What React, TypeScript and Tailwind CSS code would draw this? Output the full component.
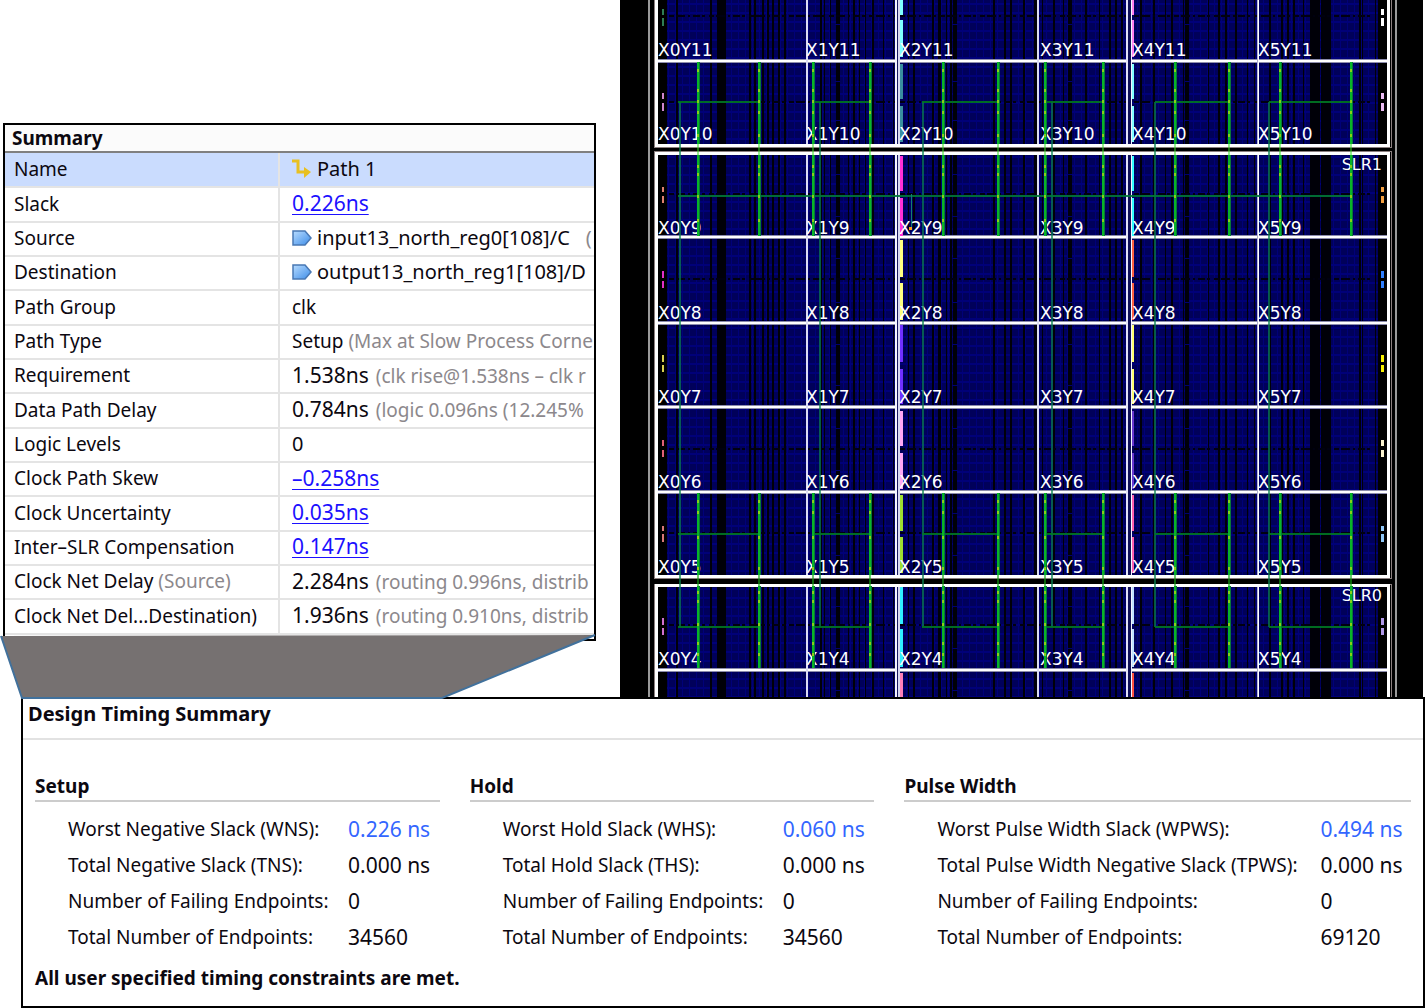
import type { ReactNode } from "react";

/* ---------- Device floorplan data ---------- */

const ROWS = [
  { id: 11, base: 56, bars: [[0, 15], [20, 57]], ports: [[9, 6], [18, 8]], left: "#2e7d55", right: "#ffffff", x2: "#80ffff", x4: "#ff80f0" },
  { id: 10, base: 140, bars: [[64, 99], [106, 142]], ports: [[93, 6], [103, 8]], left: "#cf86cf", right: "#ecbcf4", x2: "#3a8ea0", x4: "#80ffff" },
  { id: 9, base: 234, bars: [[156, 191], [198, 236]], ports: [[187, 5], [196, 7]], left: "#e08070", right: "#f4a040", x2: "#ff30d8", x4: "#30ffff" },
  { id: 8, base: 319, bars: [[240, 277], [283, 320]], ports: [[271, 7], [281, 7]], left: "#e030c8", right: "#3080ff", x2: "#ffff80", x4: "#ff6040" },
  { id: 7, base: 403, bars: [[325, 362], [369, 404]], ports: [[355, 7], [365, 7]], left: "#d8d050", right: "#f8f000", x2: "#7030ff", x4: "#ffff70" },
  { id: 6, base: 488, bars: [[411, 446], [453, 489]], ports: [[440, 6], [450, 7]], left: "#e06078", right: "#fcf4d0", x2: "#ffa8f4", x4: "#6838d0" },
  { id: 5, base: 573, bars: [[495, 531], [537, 573]], ports: [[526, 5], [534, 8]], left: "#d87878", right: "#90c8f8", x2: "#a0e030", x4: "#ff60b0" },
  { id: 4, base: 665, bars: [[587, 624], [629, 667]], ports: [[618, 7], [628, 7]], left: "#d070d0", right: "#b098e8", x2: "#30f0ff", x4: "#c0e0ff" },
];

const LABEL_X = [658, 806, 899, 1040, 1132, 1258];

/* [x, width] of the black resource columns */
const STRIPES = [
  [676, 2], [710, 2], [717, 9], [749, 2], [754, 2], [762, 2], [767, 2], [772, 2], [778, 2], [784, 2],
  [820, 2], [824, 1], [830, 1], [836, 4], [848, 1], [853, 2], [859, 1], [865, 1], [872, 2], [883, 1], [893, 1],
  [908, 1], [913, 2], [932, 2], [938, 3], [946, 1], [950, 2], [953, 4], [993, 2], [1004, 2], [1010, 2], [1023, 2], [1034, 3],
  [1042, 1], [1053, 2], [1063, 1], [1068, 4], [1085, 2], [1099, 1], [1109, 2], [1115, 2], [1121, 2],
  [1140, 2], [1153, 2], [1165, 1], [1171, 2], [1183, 1], [1185, 4], [1208, 1], [1218, 2], [1225, 2], [1235, 2], [1247, 1], [1254, 1],
  [1269, 2], [1281, 2], [1287, 2], [1293, 2], [1303, 1], [1310, 10], [1321, 10], [1359, 2], [1362, 1], [1375, 1],
];

const BLOCKS = [[0, 144], [155, 420], [586, 111]];
const ROW_LINES = [60, 236, 322, 406, 491, 669];
const DASH_LINES = [16, 102, 194, 279, 449, 533, 625];

/* bright clock spines: [x, width] */
const SPINES = [
  [697, 2], [758, 2], [812, 2], [869, 2], [942, 2], [997, 2],
  [1044, 2], [1102, 2], [1174, 2], [1228, 2], [1279, 2], [1350, 2],
];
const SPINE_SPANS = [[62, 82], [155, 81], [493, 82], [586, 82]];
const TICKS = [70, 90, 101, 112, 135, 166, 174, 196, 220, 501, 512, 537, 568, 592, 601, 624, 643, 654];

const BRANCHES = [[678, 758], [813, 870], [922, 998], [1045, 1103], [1155, 1229], [1269, 1351]];
const TRUNKS = [679, 819, 922, 1051, 1154, 1268];

function DeviceView() {
  return (
    <svg
      role="img"
      aria-label="Device floorplan"
      viewBox="620 0 803 697"
      preserveAspectRatio="xMinYMin slice"
      className="block h-full w-full bg-black"
    >
      <defs>
        <pattern id="fabric" width="7" height="9" patternUnits="userSpaceOnUse">
          <rect width="7" height="9" fill="#00005a" />
          <rect y="3" width="7" height="2" fill="#000078" />
          <rect x="3" width="1" height="9" fill="#000078" />
        </pattern>
      </defs>

      <g shapeRendering="crispEdges">
        <rect x="648" width="2" height="697" fill="#9a9a9a" />
        <rect x="1395" width="2" height="697" fill="#9a9a9a" />

        {BLOCKS.map(([y, h]) => (
          <g key={y}>
            <rect x="667" y={y} width="711" height={h} fill="url(#fabric)" />
            {STRIPES.map(([x, w]) => (
              <rect key={x} x={x} y={y} width={w} height={h} fill="#000008" />
            ))}
          </g>
        ))}

        {DASH_LINES.map((y) => (
          <g key={y} stroke="#000010" strokeWidth="2" strokeDasharray="5 2 9 3 2 3 7 2 3 4">
            <path d={`M669 ${y}H895M900 ${y}H1127M1134 ${y}H1374`} />
          </g>
        ))}

        {[24, 81, 120, 174, 216, 258, 302, 344, 385, 428, 470, 513, 555, 606, 648, 690].map((y) => (
          <path key={y} d={`M835 ${y}h5M952 ${y}h6M1067 ${y}h5M1185 ${y}h5`} stroke="#000070" />
        ))}

        {/* region separators */}
        {ROW_LINES.map((y) => (
          <g key={y}>
            <rect x="657" y={y - 1} width="731" height="4" fill="#8c8cac" />
            <rect x="657" y={y} width="731" height="2" fill="#ffffff" />
          </g>
        ))}
        {BLOCKS.map(([y, h]) => (
          <g key={y}>
            <rect x="806" y={y} width="2" height={h} fill="#dcdcf4" />
            <rect x="895" y={y} width="2" height={h} fill="#f4f4ff" />
            <rect x="897" y={y} width="1" height={h} fill="#181860" />
            <rect x="898" y={y} width="2" height={h} fill="#d8d8f0" />
            <rect x="1037" y={y} width="2" height={h} fill="#dcdcf4" />
            <rect x="1126" y={y} width="2" height={h} fill="#e4e4f8" />
            <rect x="1128" y={y} width="3" height={h} fill="#101058" />
            <rect x="1131" y={y} width="1" height={h} fill="#f4f4ff" />
            <rect x="1258" y={y} width="1" height={h} fill="#ffffff" />
            <rect x="1257" y={y} width="1" height={h} fill="#b0b0d0" />
          </g>
        ))}

        {/* super logic region outlines */}
        <g fill="none" stroke="#8c8080" strokeWidth="1">
          <path d="M654 0V147H1391V0M654 151V578H1391V151ZM654 697V584H1391V697" />
        </g>
        <g fill="none" stroke="#ffffff">
          <path d="M656 0V145H1388V0" strokeWidth="3" />
          <path d="M656 153H1388V576H656Z" strokeWidth="3" />
          <path d="M656 697V585H1388V697" strokeWidth="3" />
        </g>

        {/* I/O bank markers */}
        {ROWS.map((row) => (
          <g key={row.id}>
            {row.ports.map(([y, h]) => (
              <g key={y}>
                <rect x="662" y={y} width="2" height={h} fill={row.left} />
                <rect x="1381" y={y} width="3" height={h} fill={row.right} />
              </g>
            ))}
            {row.bars.map(([y0, y1]) => (
              <g key={y0}>
                <rect x="900" y={y0} width="3" height={y1 - y0} fill={row.x2} />
                <rect x="1132" y={y0} width="2" height={y1 - y0} fill={row.x4} />
              </g>
            ))}
          </g>
        ))}
        <rect x="900" y="673" width="3" height="24" fill="#ff80b8" />
        <rect x="1132" y="673" width="2" height="24" fill="#ff5040" />
      </g>

      <g fill="#ffffff" fontFamily='"DejaVu Sans", sans-serif' fontSize="17">
        {ROWS.map((row) =>
          LABEL_X.map((x, col) => (
            <text key={`${col}-${row.id}`} x={x} y={row.base}>{`X${col}Y${row.id}`}</text>
          )),
        )}
        <text x="1382" y="170" fontSize="16" textAnchor="end">SLR1</text>
        <text x="1382" y="601" fontSize="16" textAnchor="end">SLR0</text>
      </g>

      {/* clock routing */}
      <g shapeRendering="crispEdges">
        {TRUNKS.map((x) => (
          <rect key={x} x={x} y="102" width="2" height="525" fill="#088050" fillOpacity="0.7" />
        ))}
        {BRANCHES.map(([x0, x1]) =>
          [101, 533, 626].map((y) => (
            <rect key={`${x0}-${y}`} x={x0} y={y} width={x1 - x0} height="2" fill="#007824" fillOpacity="0.9" />
          )),
        )}
        <rect x="678" y="195" width="672" height="2" fill="#007838" fillOpacity="0.9" />
        <rect x="911" y="194" width="1" height="34" fill="#108070" />
        <rect x="909" y="227" width="3" height="3" fill="#ffa020" />
        {SPINES.map(([x, w]) => (
          <g key={x}>
            <rect x={x} y="144" width="2" height="11" fill="#30e020" fillOpacity="0.5" />
            <rect x={x} y="575" width="2" height="11" fill="#10a810" fillOpacity="0.6" />
            {SPINE_SPANS.map(([y, h]) => (
              <g key={y}>
                <rect x={x} y={y} width={w + 1} height={h} fill="#087838" />
                <rect x={x} y={y} width={w} height={h} fill="#08b428" />
              </g>
            ))}
            {TICKS.map((y) => (
              <rect key={y} x={x} y={y - 1} width="2" height="3" fill="#88d018" />
            ))}
          </g>
        ))}
      </g>
    </svg>
  );
}

/* ---------- Path summary ---------- */

function PathIcon() {
  return (
    <svg width="20" height="19" viewBox="0 0 20 19" className="shrink-0" aria-hidden="true">
      <path d="M0 2H6V13H13" fill="none" stroke="#e8c020" strokeWidth="3" />
      <path d="M12 8L19 13L12 19Z" fill="#e8c020" />
    </svg>
  );
}

function PinIcon() {
  return (
    <svg width="20" height="16" viewBox="0 0 20 16" className="shrink-0" aria-hidden="true">
      <defs>
        <linearGradient id="pin" x1="0" y1="0" x2="1" y2="1">
          <stop offset="0" stopColor="#b8dcff" />
          <stop offset="1" stopColor="#3c8ce8" />
        </linearGradient>
      </defs>
      <path d="M1 1H13L19 8L13 15H1Z" fill="url(#pin)" stroke="#4878b4" strokeWidth="1.5" />
    </svg>
  );
}

const Note = ({ children }: { children: ReactNode }) => <span className="text-[#8c888c]">{children}</span>;

const ValueLink = ({ children }: { children: ReactNode }) => (
  <a href="#path" className="text-[21px] text-[#1c10ff] underline decoration-1 underline-offset-3">{children}</a>
);

const Figure = ({ value, note }: { value: string; note: string }) => (
  <>
    <span className="text-[21px]">{value}</span>
    <span className="ml-[7px] text-[19px]"><Note>{note}</Note></span>
  </>
);

const SUMMARY: { label: ReactNode; key: string; value: ReactNode }[] = [
  { key: "name", label: "Name", value: <span className="flex items-center gap-[5px] text-[20px]"><PathIcon />Path 1</span> },
  { key: "slack", label: "Slack", value: <ValueLink>0.226ns</ValueLink> },
  {
    key: "source",
    label: "Source",
    value: (
      <span className="flex items-center text-[20px]">
        <PinIcon />
        <span className="ml-[5px]">input13_north_reg0[108]/C</span>
        <span className="ml-4"><Note>(</Note></span>
      </span>
    ),
  },
  {
    key: "destination",
    label: "Destination",
    value: <span className="flex items-center gap-[5px] text-[20px]"><PinIcon />output13_north_reg1[108]/D</span>,
  },
  { key: "group", label: "Path Group", value: "clk" },
  { key: "type", label: "Path Type", value: <>Setup <Note>(Max at Slow Process Corne</Note></> },
  { key: "req", label: "Requirement", value: <Figure value="1.538ns" note="(clk rise@1.538ns – clk r" /> },
  { key: "data", label: "Data Path Delay", value: <Figure value="0.784ns" note="(logic 0.096ns (12.245%" /> },
  { key: "levels", label: "Logic Levels", value: <span className="text-[20px]">0</span> },
  { key: "skew", label: "Clock Path Skew", value: <ValueLink>–0.258ns</ValueLink> },
  { key: "uncertainty", label: "Clock Uncertainty", value: <ValueLink>0.035ns</ValueLink> },
  { key: "slr", label: "Inter–SLR Compensation", value: <ValueLink>0.147ns</ValueLink> },
  { key: "src-delay", label: <>Clock Net Delay <Note>(Source)</Note></>, value: <Figure value="2.284ns" note="(routing 0.996ns, distrib" /> },
  { key: "dst-delay", label: "Clock Net Del...Destination)", value: <Figure value="1.936ns" note="(routing 0.910ns, distrib" /> },
];

function PathSummary() {
  return (
    <section className="overflow-hidden border-2 border-black bg-white pb-1">
      <h2 className="border-b-2 border-[#808080] bg-[#fbfbfb] px-[7px] text-[19px] leading-[26px] font-bold">Summary</h2>
      <table className="h-[482px] w-full table-fixed border-collapse text-[19px] leading-6 whitespace-nowrap">
        <colgroup>
          <col className="w-[274px]" />
          <col />
        </colgroup>
        <tbody>
          {SUMMARY.map((row, i) => (
            <tr key={row.key} className={i === 0 ? "h-[34px] border-b-2 border-[#e4e4e4] bg-[#cadcfe]" : "h-[34px] border-b-2 border-[#e4e4e4]"}>
              <th scope="row" className="border-r-2 border-[#e4e4e4] p-0 pb-0.5 pl-[9px] text-left font-normal">{row.label}</th>
              <td className="overflow-hidden p-0 pb-0.5 pl-3">{row.value}</td>
            </tr>
          ))}
        </tbody>
      </table>
    </section>
  );
}

/* ---------- Design timing summary ---------- */

type Group = { title: string; grid: string; rows: [string, string][] };

const GROUPS: Group[] = [
  {
    title: "Setup",
    grid: "grid-cols-[280px_1fr]",
    rows: [
      ["Worst Negative Slack (WNS):", "0.226 ns"],
      ["Total Negative Slack (TNS):", "0.000 ns"],
      ["Number of Failing Endpoints:", "0"],
      ["Total Number of Endpoints:", "34560"],
    ],
  },
  {
    title: "Hold",
    grid: "grid-cols-[280px_1fr]",
    rows: [
      ["Worst Hold Slack (WHS):", "0.060 ns"],
      ["Total Hold Slack (THS):", "0.000 ns"],
      ["Number of Failing Endpoints:", "0"],
      ["Total Number of Endpoints:", "34560"],
    ],
  },
  {
    title: "Pulse Width",
    grid: "grid-cols-[383px_1fr]",
    rows: [
      ["Worst Pulse Width Slack (WPWS):", "0.494 ns"],
      ["Total Pulse Width Negative Slack (TPWS):", "0.000 ns"],
      ["Number of Failing Endpoints:", "0"],
      ["Total Number of Endpoints:", "69120"],
    ],
  },
];

function TimingSummary() {
  return (
    <section className="ml-[21px] border-2 border-black bg-white pb-[13px]">
      <h2 className="border-b-2 border-[#e2e2e2] px-[5px] pb-[9px] text-[20px] leading-[30px] font-bold">Design Timing Summary</h2>
      <div className="mt-8 grid grid-cols-[405fr_405fr_507fr] gap-[30px] pr-3 pl-3">
        {GROUPS.map((group) => (
          <section key={group.title}>
            <h3 className="border-b-2 border-[#cccccc] text-[19px] leading-7 font-bold">{group.title}</h3>
            <dl className="mt-[9px] pl-[33px] text-[19px] leading-9 whitespace-nowrap">
              {group.rows.map(([label, value], i) => (
                <div key={label} className={`grid ${group.grid}`}>
                  <dt>{label}</dt>
                  <dd className={i === 0 ? "text-[21px] text-[#3366ff]" : "text-[21px]"}>{value}</dd>
                </div>
              ))}
            </dl>
          </section>
        ))}
      </div>
      <p className="mt-2 px-3 text-[19px] leading-[30px] font-bold">All user specified timing constraints are met.</p>
    </section>
  );
}

export default function App() {
  return (
    <main className="bg-white font-['Noto_Sans',sans-serif] text-[#0c0810]">
      <div className="grid h-[697px] grid-cols-[620px_1fr]">
        <div className="relative pt-[123px] pr-6 pl-[3px]">
          <PathSummary />
          <svg width="600" height="66" viewBox="0 0 600 66" className="absolute top-[634px] left-0" aria-hidden="true">
            <path d="M1 2L595 1L442 64H22Z" fill="#767171" />
            <path d="M1 2L22 64H442L595 1" fill="none" stroke="#41719c" strokeWidth="2" />
          </svg>
        </div>
        <div className="mr-0.5 min-w-0 overflow-hidden">
          <DeviceView />
        </div>
      </div>
      <TimingSummary />
    </main>
  );
}
